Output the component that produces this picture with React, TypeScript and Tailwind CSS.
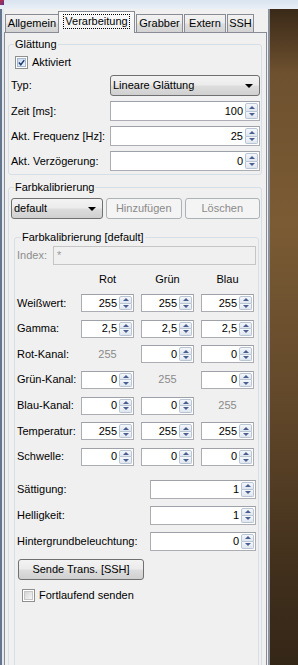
import * as React from "react";

const Arrow = ({ up }: { up?: boolean }) =>
  up ? (
    <span className="h-0 w-0 border-x-[3px] border-b-[3px] border-x-transparent border-b-[#4a5f8f]" />
  ) : (
    <span className="h-0 w-0 border-x-[3px] border-t-[3px] border-x-transparent border-t-[#4a5f8f]" />
  );

function SpinButtons() {
  return (
    <span className="flex w-[14px] shrink-0 flex-col py-[1px] pr-[1px]">
      <span className="flex flex-1 items-center justify-center rounded-t-[2px] border border-[#bac5d4] bg-gradient-to-b from-[#f5f8fb] to-[#dfe6ef]">
        <Arrow up />
      </span>
      <span className="flex flex-1 items-center justify-center rounded-b-[2px] border border-t-0 border-[#bac5d4] bg-gradient-to-b from-[#f5f8fb] to-[#dfe6ef]">
        <Arrow />
      </span>
    </span>
  );
}

function Spinner({ value, className = "" }: { value: string; className?: string }) {
  return (
    <div className={`flex shrink-0 border border-[#abadb3] border-t-[#9ea1a8] bg-white ${className}`}>
      <span className="flex min-w-0 flex-1 items-center justify-end pr-[2px] text-black">{value}</span>
      <SpinButtons />
    </div>
  );
}

function Combo({ label, className = "" }: { label: string; className?: string }) {
  return (
    <div
      className={`flex h-[21px] shrink-0 items-center rounded-[3px] border border-[#707070] bg-[linear-gradient(#f3f3f3,#ebebeb_48%,#dddddd_52%,#d0d0d0)] pl-[2px] pr-[6px] ${className}`}
    >
      <span className="min-w-0 flex-1 truncate">{label}</span>
      <span className="h-0 w-0 border-x-[4px] border-t-[4px] border-x-transparent border-t-black" />
    </div>
  );
}

function CheckBox({ checked }: { checked?: boolean }) {
  return (
    <span className="flex h-[13px] w-[13px] shrink-0 items-center justify-center border border-[#8e8f8f] bg-white">
      <span
        className={
          checked
            ? "flex h-[9px] w-[9px] items-center justify-center border border-[#a7b7cf] bg-gradient-to-br from-[#c9d9ef] to-[#eef4fb]"
            : "h-[9px] w-[9px] border border-[#c6c6c6] bg-gradient-to-br from-[#d5d5d5] to-[#f6f6f6]"
        }
      >
        {checked && (
          <svg viewBox="0 0 9 9" className="h-[9px] w-[9px]" aria-hidden="true">
            <path d="M1.2 4.6 L3.6 7.4 L8 1.4" stroke="#1f3a70" strokeWidth="1.9" fill="none" />
          </svg>
        )}
      </span>
    </span>
  );
}

const Tab = ({ label, w }: { label: string; w: string }) => (
  <div
    className={`ml-[1px] flex h-[18px] items-center justify-center border border-b-0 border-[#898c95] bg-[linear-gradient(#f2f2f2,#ebebeb_48%,#dddddd_52%,#d3d3d3)] ${w}`}
  >
    {label}
  </div>
);

const colorRows: { label: string; values: (string | null)[] }[] = [
  { label: "Weißwert:", values: ["255", "255", "255"] },
  { label: "Gamma:", values: ["2,5", "2,5", "2,5"] },
  { label: "Rot-Kanal:", values: [null, "0", "0"] },
  { label: "Grün-Kanal:", values: ["0", null, "0"] },
  { label: "Blau-Kanal:", values: ["0", "0", null] },
  { label: "Temperatur:", values: ["255", "255", "255"] },
  { label: "Schwelle:", values: ["0", "0", "0"] },
];

export default function App() {
  return (
    <div className="flex h-[665px] w-[298px] flex-col overflow-hidden bg-[#f0f0f0] font-['Liberation_Sans',Arial,sans-serif] text-[11px] leading-[13px] text-black">
      {/* title bar, cut off by the screenshot */}
      <div className="flex h-[9px] shrink-0 bg-gradient-to-b from-[#d9e4f0] to-[#e9eff6]">
        <span className="h-[5px] w-[4px] shrink-0 bg-gradient-to-br from-[#c2203c] to-[#5a2a8c]" />
      </div>

      <div className="flex flex-1">
        {/* window */}
        <div className="flex w-[270px] shrink-0">
          <div className="w-[4px] shrink-0 border-l-2 border-[#65768c] bg-[#e2e8ef]" />
          <div className="flex w-[263px] shrink-0 flex-col">
            {/* tabs */}
            <div className="flex h-[23px] shrink-0 items-end">
              <Tab label="Allgemein" w="w-[54px]" />
              <div className="relative z-10 -mb-[1px] -ml-[1px] flex h-[22px] w-[77px] items-center justify-center border border-b-0 border-[#898c95] bg-gradient-to-b from-[#fbfbfb] to-[#f0f0f0] pb-[2px]">
                <span className="border border-dotted border-black px-[1px]">Verarbeitung</span>
              </div>
              <Tab label="Grabber" w="w-[47px]" />
              <Tab label="Extern" w="w-[42px]" />
              <Tab label="SSH" w="w-[27px]" />
            </div>

            {/* tab pane */}
            <div className="flex min-w-0 flex-1 flex-col border border-b-0 border-[#898c95] bg-[#f0f0f0] pl-[3px] pr-[4px] pt-[4.5px]">
              <fieldset className="min-w-0 rounded-[3px] border border-[#d5dfe5] pb-[3px] pl-[2px] pr-[1px]">
                <legend className="ml-[3px] px-[1px]">Glättung</legend>
                <div className="mt-[5px] flex h-[14px] items-center gap-[4px] pl-[4px]">
                  <CheckBox checked />
                  <span>Aktiviert</span>
                </div>
                <div className="mt-[5.5px] flex items-center">
                  <span className="flex-1">Typ:</span>
                  <Combo label="Lineare Glättung" className="w-[150px]" />
                </div>
                {[
                  ["Zeit [ms]:", "100"],
                  ["Akt. Frequenz [Hz]:", "25"],
                  ["Akt. Verzögerung:", "0"],
                ].map(([label, value]) => (
                  <div key={label} className="mt-[5px] flex items-center">
                    <span className="flex-1">{label}</span>
                    <Spinner value={value} className="h-[20px] w-[150px]" />
                  </div>
                ))}
              </fieldset>

              <fieldset className="mt-[5.5px] min-w-0 rounded-[3px] border border-[#d5dfe5] pl-[2px] pr-[1px]">
                <legend className="ml-[3px] px-[1px]">Farbkalibrierung</legend>
                <div className="mt-[4.5px] flex gap-[3px]">
                  <Combo label="default" className="w-[92px]" />
                  <div className="flex h-[21px] min-w-0 flex-1 items-center justify-center rounded-[3px] border border-[#adb2b5] bg-[#f4f4f4] text-[#8a8a8a]">
                    Hinzufügen
                  </div>
                  <div className="flex h-[21px] min-w-0 flex-1 items-center justify-center rounded-[3px] border border-[#adb2b5] bg-[#f4f4f4] text-[#8a8a8a]">
                    Löschen
                  </div>
                </div>

                <fieldset className="ml-[3px] mr-[1px] mt-[11.5px] min-w-0 rounded-[3px] border border-[#d5dfe5] pl-[2px] pr-[2px]">
                  <legend className="ml-[4px] px-[1px]">Farbkalibrierung [default]</legend>
                  <div className="mt-[2.5px] flex items-center">
                    <span className="w-[36px] shrink-0 text-[#8d8d8d]">Index:</span>
                    <div className="flex h-[19px] min-w-0 flex-1 items-center border border-[#c5c5c5] bg-[#f0f0f0] pl-[3px] text-[#9a9a9a]">
                      *
                    </div>
                  </div>

                  <div className="mt-[7.5px] flex">
                    <span className="w-[64px] shrink-0" />
                    <div className="flex gap-[7px]">
                      <span className="w-[53px] text-center">Rot</span>
                      <span className="w-[53px] text-center">Grün</span>
                      <span className="w-[53px] text-center">Blau</span>
                    </div>
                  </div>

                  <div className="mt-[8.5px] flex flex-col gap-[7.67px]">
                    {colorRows.map((row) => (
                      <div key={row.label} className="flex h-[18px] items-center">
                        <span className="w-[64px] shrink-0">{row.label}</span>
                        <div className="flex h-full gap-[7px]">
                          {row.values.map((v, i) =>
                            v === null ? (
                              <span key={i} className="flex w-[53px] items-center justify-center text-[#8a8a8a]">
                                255
                              </span>
                            ) : (
                              <Spinner key={i} value={v} className="h-[18px] w-[53px]" />
                            )
                          )}
                        </div>
                      </div>
                    ))}
                  </div>

                  <div className="mt-[14px] flex flex-col gap-[7px]">
                    {[
                      ["Sättigung:", "1"],
                      ["Helligkeit:", "1"],
                      ["Hintergrundbeleuchtung:", "0"],
                    ].map(([label, value]) => (
                      <div key={label} className="flex items-center">
                        <span className="flex-1">{label}</span>
                        <Spinner value={value} className="h-[19px] w-[106px]" />
                      </div>
                    ))}
                  </div>

                  <div className="ml-[1px] mt-[8px] flex h-[21px] w-[126px] items-center justify-center rounded-[3px] border border-[#707070] bg-[linear-gradient(#f3f3f3,#ebebeb_48%,#dddddd_52%,#d0d0d0)]">
                    Sende Trans. [SSH]
                  </div>

                  <div className="mt-[9px] flex h-[13px] items-center gap-[4px] pl-[5px]">
                    <CheckBox />
                    <span>Fortlaufend senden</span>
                  </div>

                  <div className="h-[120px]" />
                </fieldset>
              </fieldset>
            </div>
          </div>
          <div className="w-[3px] shrink-0 border-r-2 border-[#8a8f98] bg-[#edf1f5]" />
        </div>

        {/* desktop behind the window */}
        <div className="flex-1 bg-[linear-gradient(180deg,#3a2918_0%,#6e512f_9%,#7a5b34_30%,#62482a_55%,#3f2e1b_80%,#2d2115_100%)]" />
      </div>
    </div>
  );
}
